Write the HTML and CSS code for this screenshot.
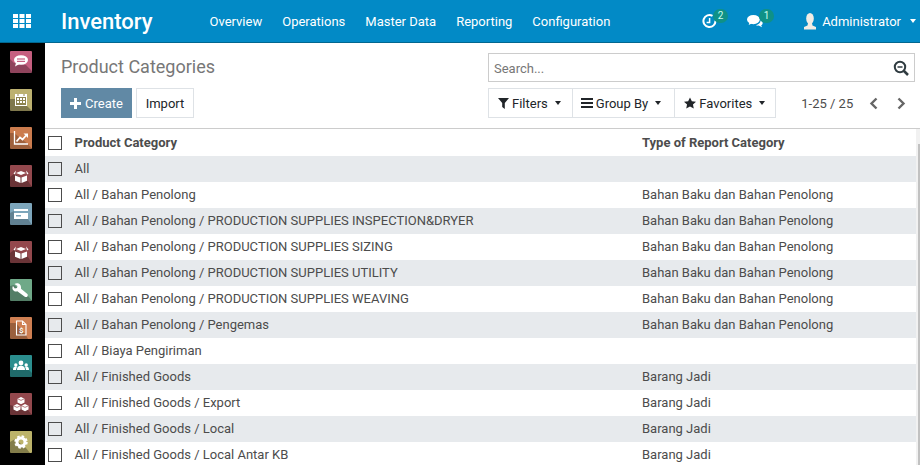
FILE: index.html
```html
<!DOCTYPE html>
<html>
<head>
<meta charset="utf-8">
<title>Product Categories</title>
<link rel="stylesheet" href="styles.css">
</head>
<body>
<header class="navbar">
	<a class="apps" href="#">
		<svg width="18" height="14" viewBox="0 0 18 14" fill="#fff">
			<rect x="0" y="0" width="5" height="4"/><rect x="6.5" y="0" width="5" height="4"/><rect x="13" y="0" width="5" height="4"/>
			<rect x="0" y="5" width="5" height="4"/><rect x="6.5" y="5" width="5" height="4"/><rect x="13" y="5" width="5" height="4"/>
			<rect x="0" y="10" width="5" height="4"/><rect x="6.5" y="10" width="5" height="4"/><rect x="13" y="10" width="5" height="4"/>
		</svg>
	</a>
	<span class="brand">Inventory</span>
	<nav class="menu">
		<a href="#">Overview</a>
		<a href="#">Operations</a>
		<a href="#">Master Data</a>
		<a href="#">Reporting</a>
		<a href="#">Configuration</a>
	</nav>
	<div class="systray">
		<span class="tray-item tray-clock">
			<svg width="15" height="15" viewBox="0 0 15 15" fill="none" stroke="#fff">
				<path d="M10.5 1.9A6 6 0 1 0 13.4 6.5" stroke-width="2"/>
				<path d="M7.6 4v4.4H4.6" stroke-width="1.5"/>
			</svg>
			<b class="badge">2</b>
		</span>
		<span class="tray-item tray-chat">
			<svg width="16" height="14" viewBox="0 0 16 14" fill="#fff">
				<ellipse cx="6.4" cy="5.6" rx="6.4" ry="4.6"/>
				<path d="M2.5 8l-.8 3 4-2z"/>
				<path d="M13.6 6.5c1.6.8 2.4 2 2 3.2-.2.7-.8 1.2-1.4 1.5l.8 2-3.3-1.6c-1 .1-2 0-2.8-.4 2.6-.4 4.7-2.4 4.7-4.7z"/>
			</svg>
			<b class="badge">1</b>
		</span>
		<span class="user">
			<svg width="14" height="17" viewBox="0 0 14 17" fill="#f1ece4">
				<ellipse cx="7" cy="5.5" rx="3.8" ry="5.5"/>
				<path d="M5 10h4l.5 2.500 3.500 1.500v2.500H1V14l3.500-1.500z"/>
			</svg>
			<span>Administrator</span>
			<i class="caret"></i>
		</span>
	</div>
</header>

<div class="wrap">
	<aside class="sidebar">
		<svg class="app-icon" viewBox="0 0 22 22"><rect width="22" height="22" rx="1" fill="#c65f80"/><path d="M0 8L4 12 16 14 22 20V22H0z" opacity=".28"/><ellipse cx="11" cy="9" rx="7" ry="4.800" fill="#fff"/><path d="M6 12L5 15.500 9.500 13z" fill="#fff"/><rect x="7" y="7.400" width="8" height="1.200" fill="#c65f80"/><rect x="7" y="9.800" width="8" height="1.200" fill="#c65f80"/></svg>
		<svg class="app-icon" viewBox="0 0 22 22"><rect width="22" height="22" rx="1" fill="#bcb170"/><path d="M0 10L5 10 17 17 22 22H0z" opacity=".32"/><rect x="5" y="5" width="12" height="12" fill="#fff"/><rect x="6" y="8" width="10" height="8" fill="#8d8450"/><g fill="#fff"><rect x="7" y="9" width="2" height="2"/><rect x="10" y="9" width="2" height="2"/><rect x="13" y="9" width="2" height="2"/><rect x="7" y="12" width="2" height="2"/><rect x="10" y="12" width="2" height="2"/><rect x="13" y="12" width="2" height="2"/></g><g fill="#8d8450"><rect x="7.500" y="5" width="1" height="2"/><rect x="13.500" y="5" width="1" height="2"/></g></svg>
		<svg class="app-icon" viewBox="0 0 22 22"><rect width="22" height="22" rx="1" fill="#cb7c4e"/><path d="M0 6L4 6 18 17 22 22H0z" opacity=".22"/><path d="M4.500 4v13H18" fill="none" stroke="#fff" stroke-width="1.300"/><path d="M6.500 14.500l3.500-4 2.500 2L16 8.500" fill="none" stroke="#fff" stroke-width="1.800"/><path d="M13.500 6.500H18V11z" fill="#fff"/></svg>
		<svg class="app-icon" viewBox="0 0 22 22"><rect width="22" height="22" rx="1" fill="#93484d"/><path d="M0 12L4 9 18 16 22 22H0z" opacity=".28"/><path d="M11 6l5 2-5 2-5-2z" fill="#fff"/><path d="M6 5.500L3.500 8.500 5 9.500zM16 5.500l2.500 3-1.500 1z" fill="#fff"/><path d="M5 10.500l5.500 2V18L5 15.800zM17 10.500l-5.500 2V18l5.500-2.200z" fill="#fff"/></svg>
		<svg class="app-icon" viewBox="0 0 22 22"><rect width="22" height="22" rx="1" fill="#7da6bb"/><path d="M0 10L4 8 18 16 22 22H0z" opacity=".22"/><rect x="4" y="6" width="14" height="10" fill="#fff"/><rect x="4" y="8" width="14" height="2" fill="#7da6bb"/><rect x="6" y="12" width="5" height="1.500" fill="#7da6bb"/></svg>
		<svg class="app-icon" viewBox="0 0 22 22"><rect width="22" height="22" rx="1" fill="#93484d"/><path d="M0 12L4 9 18 16 22 22H0z" opacity=".28"/><path d="M11 6l5 2-5 2-5-2z" fill="#fff"/><path d="M6 5.500L3.500 8.500 5 9.500zM16 5.500l2.500 3-1.500 1z" fill="#fff"/><path d="M5 10.500l5.500 2V18L5 15.800zM17 10.500l-5.500 2V18l5.500-2.200z" fill="#fff"/></svg>
		<svg class="app-icon" viewBox="0 0 22 22"><rect width="22" height="22" rx="1" fill="#6fa988"/><path d="M0 7L4 6 19 18 22 22H0z" opacity=".25"/><path d="M8 4.300C6.700 4 5.500 4.300 4.500 5l3 2-.5 2-2.200.6L3 7c-.6 1-.8 2.300-.3 3.400.8 1.700 2.800 2.400 4.600 1.800l7.500 5.500c.8.600 2 .5 2.600-.3s.5-1.900-.3-2.600L11 9.800C11.400 7.300 10.300 4.900 8 4.300z" fill="#fff"/></svg>
		<svg class="app-icon" viewBox="0 0 22 22"><rect width="22" height="22" rx="1" fill="#ce7f52"/><path d="M0 6L6 6 16 18 18 22H0z" opacity=".25"/><path d="M6.500 4h6l3.500 3.500V18H6.500zM12.500 4v3.500H16" fill="none" stroke="#fff" stroke-width="1.100"/><text class="doc-dollar" x="11.200" y="15.500">$</text></svg>
		<svg class="app-icon" viewBox="0 0 22 22"><rect width="22" height="22" rx="1" fill="#2b8e8e"/><path d="M0 12L3 14 19 15 22 18V22H0z" opacity=".25"/><g fill="#fff"><circle cx="11" cy="8" r="2.400"/><path d="M7 15c0-3 1.500-4.200 4-4.200s4 1.200 4 4.200z"/><circle cx="5.800" cy="10" r="1.700"/><path d="M3 15c0-2.500 1-3.400 2.800-3.400.6 0 1 .1 1.200.3-.6.800-.9 1.800-.9 3.100z"/><circle cx="16.200" cy="10" r="1.700"/><path d="M19 15c0-2.500-1-3.400-2.800-3.400-.6 0-1 .1-1.200.3.600.8.900 1.800.9 3.100z"/></g></svg>
		<svg class="app-icon" viewBox="0 0 22 22"><rect width="22" height="22" rx="1" fill="#93484d"/><path d="M0 12L4 13 18 17 22 22H0z" opacity=".28"/><g fill="#fff"><path d="M11 4l3.500 1.700v3.800L11 11.200 7.500 9.500V5.700z"/><path d="M7 11l3.500 1.700v3.800L7 18.200 3.500 16.500v-3.800z"/><path d="M15 11l3.500 1.700v3.800L15 18.200l-3.500-1.700v-3.800z"/></g><g fill="none" stroke="#93484d" stroke-width=".7"><path d="M7.500 5.700L11 7.400l3.500-1.700M3.500 12.700L7 14.400l3.500-1.700M11.500 12.700l3.500 1.700 3.500-1.700"/></g></svg>
		<svg class="app-icon" viewBox="0 0 22 22"><rect width="22" height="22" rx="1" fill="#bcb36a"/><path d="M0 11L5 8 16 17 20 22H0z" opacity=".3"/><circle cx="11" cy="11" r="4" fill="none" stroke="#fff" stroke-width="3"/><circle cx="11" cy="11" r="5.800" fill="none" stroke="#fff" stroke-width="1.800" stroke-dasharray="2.500 2.050"/></svg>
	</aside>

	<main class="content">
		<section class="panel">
			<div class="panel-left">
				<h1>Product Categories</h1>
				<div class="actions">
					<a class="btn btn-primary" href="#">
						<svg width="11" height="11" viewBox="0 0 11 11" fill="#fff"><path d="M4 0h3v4h4v3H7v4H4V7H0V4h4z"/></svg>
						Create
					</a>
					<a class="btn" href="#">Import</a>
				</div>
			</div>
			<div class="panel-right">
				<div class="search">
					<span class="search-hint">Search...</span>
					<svg width="16" height="16" viewBox="0 0 16 16" fill="none" stroke="#2f3b40"><circle cx="7" cy="7" r="5.2" stroke-width="2"/><path d="M4.500 7h5" stroke-width="1.500"/><path d="M11 11l4 4" stroke-width="2.500"/></svg>
				</div>
				<div class="tools">
					<div class="filters">
						<a href="#"><svg width="11" height="11" viewBox="0 0 11 11" fill="#212529"><path d="M0 0h11L6.800 5v6L4.200 9V5z"/></svg>Filters<i class="caret"></i></a>
						<a class="filter-group" href="#"><svg width="12" height="10" viewBox="0 0 12 10" fill="#212529"><path d="M0 0h12v2H0zM0 4h12v2H0zM0 8h12v2H0z"/></svg>Group By<i class="caret"></i></a>
						<a class="filter-fav" href="#"><svg width="12" height="12" viewBox="0 0 13 12" fill="#212529"><path d="M6.500 0l2 4 4.500.6-3.300 3.100.9 4.300-4.100-2.200L2.400 12l.9-4.300L0 4.600 4.500 4z"/></svg>Favorites<i class="caret"></i></a>
					</div>
					<div class="pager">
						<span>1-25 / 25</span>
						<svg width="9" height="13" viewBox="0 0 9 13" fill="none" stroke="#666" stroke-width="2.400"><path d="M7.500 1.500l-5 5 5 5"/></svg>
						<svg width="9" height="13" viewBox="0 0 9 13" fill="none" stroke="#666" stroke-width="2.400"><path d="M1.500 1.500l5 5-5 5"/></svg>
					</div>
				</div>
			</div>
		</section>

		<div class="list-wrap">
			<table class="list">
				<colgroup><col class="col-check"><col class="col-name"><col></colgroup>
				<thead>
					<tr><th><i class="check"></i></th><th>Product Category</th><th>Type of Report Category</th></tr>
				</thead>
				<tbody>
					<tr><td><i class="check"></i></td><td>All</td><td></td></tr>
					<tr><td><i class="check"></i></td><td>All / Bahan Penolong</td><td>Bahan Baku dan Bahan Penolong</td></tr>
					<tr><td><i class="check"></i></td><td>All / Bahan Penolong / PRODUCTION SUPPLIES INSPECTION&amp;DRYER</td><td>Bahan Baku dan Bahan Penolong</td></tr>
					<tr><td><i class="check"></i></td><td>All / Bahan Penolong / PRODUCTION SUPPLIES SIZING</td><td>Bahan Baku dan Bahan Penolong</td></tr>
					<tr><td><i class="check"></i></td><td>All / Bahan Penolong / PRODUCTION SUPPLIES UTILITY</td><td>Bahan Baku dan Bahan Penolong</td></tr>
					<tr><td><i class="check"></i></td><td>All / Bahan Penolong / PRODUCTION SUPPLIES WEAVING</td><td>Bahan Baku dan Bahan Penolong</td></tr>
					<tr><td><i class="check"></i></td><td>All / Bahan Penolong / Pengemas</td><td>Bahan Baku dan Bahan Penolong</td></tr>
					<tr><td><i class="check"></i></td><td>All / Biaya Pengiriman</td><td></td></tr>
					<tr><td><i class="check"></i></td><td>All / Finished Goods</td><td>Barang Jadi</td></tr>
					<tr><td><i class="check"></i></td><td>All / Finished Goods / Export</td><td>Barang Jadi</td></tr>
					<tr><td><i class="check"></i></td><td>All / Finished Goods / Local</td><td>Barang Jadi</td></tr>
					<tr><td><i class="check"></i></td><td>All / Finished Goods / Local Antar KB</td><td>Barang Jadi</td></tr>
				</tbody>
			</table>
			<div class="scrollbar"><div class="scroll-thumb"></div></div>
		</div>
	</main>
</div>
</body>
</html>
```

FILE: styles.css
```css
* { margin: 0; padding: 0; box-sizing: border-box; }
html, body {
	height: 100%;
	overflow: hidden;
}
body {
	font-family: Roboto, "Liberation Sans", sans-serif;
	font-size: 13px;
	color: #212529;
	background: #fff;
}
a {
	color: inherit;
	text-decoration: none;
}

/* top bar */
.navbar {
	display: flex;
	align-items: center;
	height: 43px;
	background: #028ac6;
	border-bottom: 1px solid #02678f;
	color: #fff;
}
.apps {
	display: flex;
	width: 61px;
	padding-left: 13px;
}
.brand {
	width: 148.5px;
	font-size: 22px;
	font-weight: 500;
}
.menu {
	display: flex;
	gap: 20px;
}
.systray {
	display: flex;
	align-items: center;
	margin-left: auto;
	padding-right: 4px;
}
.tray-item {
	position: relative;
	display: flex;
}
.tray-clock { margin-right: 30px; }
.tray-chat { margin-right: 40px; }
.badge {
	position: absolute;
	top: -5px;
	left: 11px;
	width: 15px;
	height: 14px;
	border-radius: 7px;
	background: #0f9187;
	color: #cfe;
	font-size: 10px;
	font-weight: 400;
	line-height: 14px;
	text-align: center;
}
.tray-chat .badge { left: 12px; }
.user {
	display: flex;
	align-items: center;
	gap: 5px;
}
.caret {
	display: inline-block;
	width: 0;
	height: 0;
	border-top: 4px solid;
	border-left: 3.5px solid transparent;
	border-right: 3.5px solid transparent;
	margin-left: 4px;
}

/* sidebar */
.wrap {
	display: flex;
	height: 422px;
}
.sidebar {
	display: flex;
	flex-direction: column;
	flex: none;
	gap: 16px;
	width: 45px;
	padding: 8px 0 0 10px;
	background: #000;
}
.app-icon {
	display: block;
	width: 22px;
	height: 22px;
	flex: none;
}
.doc-dollar {
	fill: #fff;
	font-size: 8px;
	font-weight: 700;
	text-anchor: middle;
}

/* control panel */
.content {
	flex: 1;
	min-width: 0;
}
.panel {
	display: flex;
	justify-content: space-between;
	height: 86px;
	padding: 10px 5px 0 16px;
	border-bottom: 1px solid #ccc;
}
h1 {
	height: 35px;
	color: #777;
	font-size: 18px;
	font-weight: 400;
	line-height: 28px;
}
.actions {
	display: flex;
	gap: 4px;
}
.btn {
	display: flex;
	align-items: center;
	justify-content: center;
	gap: 4px;
	width: 58px;
	height: 30px;
	border: 1px solid #dee2e6;
}
.btn-primary {
	width: 71px;
	border-color: #6189a5;
	background: #6189a5;
	color: #fff;
}
.panel-right { width: 427px; }
.search {
	display: flex;
	align-items: center;
	justify-content: space-between;
	height: 29px;
	margin-bottom: 6px;
	padding: 0 5px;
	border: 1px solid #ccc;
	color: #777;
}
.search-hint { padding-top: 2px; }
.tools {
	display: flex;
	align-items: center;
}
.filters {
	display: flex;
	height: 30px;
	border: 1px solid #dee2e6;
}
.filters a {
	display: flex;
	align-items: center;
	gap: 3px;
	padding: 0 11px 0 9px;
	border-left: 1px solid #dee2e6;
}
.filters a:first-child { border-left: 0; }
.filters .filter-fav { padding-right: 10px; }
.filters .filter-group { padding: 0 13px 0 8px; }
.filters .caret { margin-left: 4px; }
.pager {
	display: flex;
	align-items: center;
	margin-left: 25px;
	color: #4c4c4c;
}
.pager svg { margin-left: 16px; }
.pager svg:last-child { margin-left: 19px; }

/* list */
.list-wrap {
	display: flex;
	height: 336px;
	overflow: hidden;
}
.list {
	flex: 1;
	align-self: flex-start;
	min-width: 0;
	border-collapse: collapse;
	table-layout: fixed;
	color: #4c4c4c;
}
.col-check { width: 29px; }
.col-name { width: 568px; }
.list th, .list td {
	height: 26px;
	text-align: left;
	vertical-align: middle;
	white-space: nowrap;
}
.list th {
	height: 27px;
	font-weight: 700;
}
.list th + th, .list td + td { padding-left: 0.6px; }
.list td + td { padding-bottom: 2px; }
.list th:last-child, .list td:last-child { padding-left: 0; }
.list th:first-child, .list td:first-child { padding-left: 3px; }
.list tbody tr:nth-child(odd) { background: #e7eaed; }
.check {
	display: block;
	width: 14px;
	height: 14px;
	border: 1px solid #4c4c4c;
	background: #fff;
}
.list tbody tr:nth-child(odd) .check { background: transparent; }
.scrollbar {
	flex: none;
	width: 4px;
	padding: 15px 0 0 2px;
	background: #f1f1f1;
}
.scroll-thumb {
	height: 100%;
	background: #c1c1c1;
}
```
